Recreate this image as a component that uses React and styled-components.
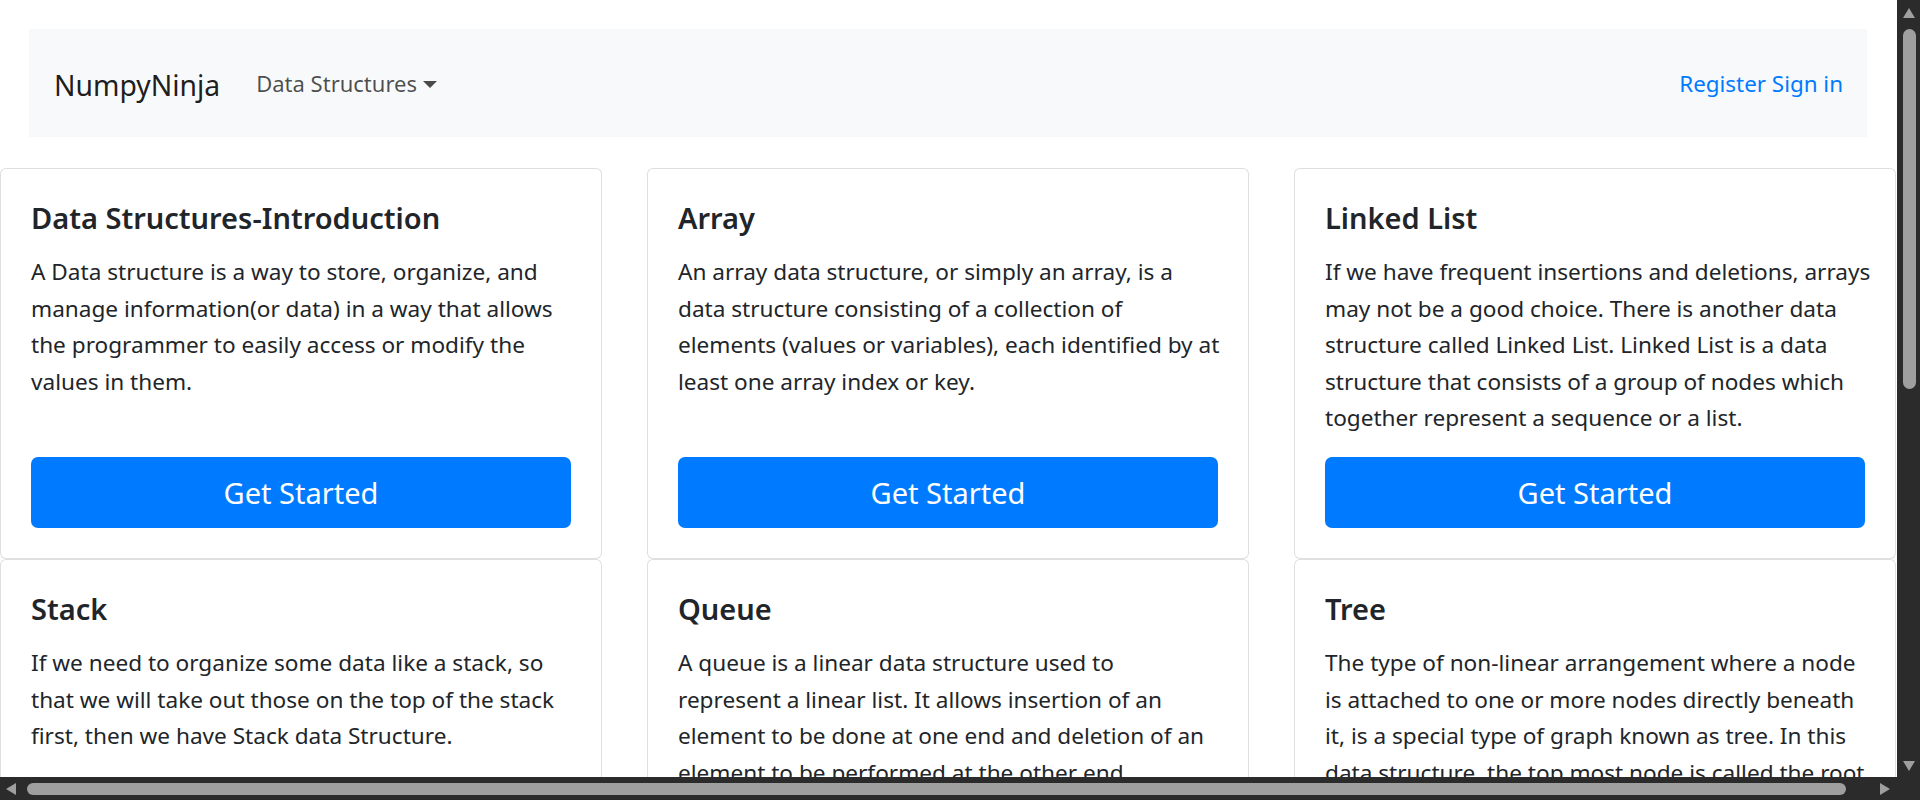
import React from 'react'
import styled, { createGlobalStyle } from 'styled-components'

const GlobalStyle = createGlobalStyle`
  html, body {
    margin: 0;
    padding: 0;
    overflow: hidden;
    background: #fff;
  }
  body {
    font-family: "Noto Sans", "Open Sans", sans-serif;
    color: #212529;
  }
  * { box-sizing: border-box; }
`

const topics = [
  {
    title: 'Data Structures-Introduction',
    lines: [
      'A Data structure is a way to store, organize, and',
      'manage information(or data) in a way that allows',
      'the programmer to easily access or modify the',
      'values in them.',
    ],
  },
  {
    title: 'Array',
    lines: [
      'An array data structure, or simply an array, is a',
      'data structure consisting of a collection of',
      'elements (values or variables), each identified by at',
      'least one array index or key.',
    ],
  },
  {
    title: 'Linked List',
    lines: [
      'If we have frequent insertions and deletions, arrays',
      'may not be a good choice. There is another data',
      'structure called Linked List. Linked List is a data',
      'structure that consists of a group of nodes which',
      'together represent a sequence or a list.',
    ],
  },
  {
    title: 'Stack',
    lines: [
      'If we need to organize some data like a stack, so',
      'that we will take out those on the top of the stack',
      'first, then we have Stack data Structure.',
    ],
  },
  {
    title: 'Queue',
    lines: [
      'A queue is a linear data structure used to',
      'represent a linear list. It allows insertion of an',
      'element to be done at one end and deletion of an',
      'element to be performed at the other end.',
    ],
  },
  {
    title: 'Tree',
    lines: [
      'The type of non-linear arrangement where a node',
      'is attached to one or more nodes directly beneath',
      'it, is a special type of graph known as tree. In this',
      'data structure, the top most node is called the root',
      'node.',
    ],
  },
]

const Page = styled.div`
  height: 100vh;
  overflow: hidden;
`

const Navbar = styled.nav`
  display: flex;
  align-items: center;
  width: 1838px;
  height: 108px;
  margin: 29px 0 31px 29px;
  padding: 0 24px 0 25px;
  background: #f8f9fa;
`

const Brand = styled.a`
  font-size: 28.3px;
  color: rgba(0, 0, 0, 0.9);
  margin-right: 24px;
  padding-top: 4px;
`

const NavLink = styled.a`
  display: flex;
  align-items: center;
  font-size: 22px;
  color: rgba(0, 0, 0, 0.7);
  padding: 0 12px;
`

const Caret = styled.span`
  display: inline-block;
  margin-left: 6px;
  margin-top: 2px;
  border-top: 7.5px solid rgba(0, 0, 0, 0.7);
  border-left: 7.5px solid transparent;
  border-right: 7.5px solid transparent;
`

const AuthLinks = styled.div`
  margin-left: auto;
  font-size: 22.4px;
  color: #007bff;
`

const CardGrid = styled.main`
  display: grid;
  grid-template-columns: repeat(3, 602px);
  column-gap: 45px;
  width: 1896px;
`

const Card = styled.section`
  display: flex;
  flex-direction: column;
  border: 1px solid rgba(0, 0, 0, 0.125);
  border-radius: 6px;
  padding: 30px;
  background: #fff;
`

const CardTitle = styled.h5`
  margin: 0 0 18px;
  font-size: 29px;
  font-weight: 600;
  line-height: 37px;
`

const CardText = styled.p`
  margin: 0 0 20px;
  font-size: 22.6px;
  line-height: 36.6px;
  white-space: nowrap;
`

const StartButton = styled.button`
  margin-top: auto;
  width: 100%;
  height: 71px;
  border: none;
  border-radius: 7px;
  background: #007bff;
  color: #fff;
  font-family: inherit;
  font-size: 29px;
  cursor: pointer;
`

const Track = styled.div`
  position: fixed;
  background: #2b2b2b;
  display: flex;
  align-items: center;
`

const VTrack = styled(Track)`
  top: 0;
  right: 0;
  width: 23px;
  height: 777px;
  flex-direction: column;
  padding: 7px 0 5px;
`

const HTrack = styled(Track)`
  left: 0;
  bottom: 0;
  width: 1920px;
  height: 23px;
  padding: 0 29px 0 5px;
`

const Thumb = styled.div`
  background: #9f9f9f;
  border-radius: 7px;
  width: ${({ $vertical }) => ($vertical ? '13px' : '1820px')};
  height: ${({ $vertical }) => ($vertical ? '360px' : '12px')};
  margin: ${({ $vertical }) => ($vertical ? '10px 0 0 1px' : '0 33px 0 10px')};
`

const Spacer = styled.div`
  flex: 1;
`

const Arrow = ({ dir }) => {
  const pts = {
    up: '6,1 12,11 0,11',
    down: '0,1 12,1 6,11',
    left: '11,0 11,12 1,6',
    right: '1,0 1,12 11,6',
  }[dir]
  return (
    <svg width="12" height="12" viewBox="0 0 12 12" style={{ flexShrink: 0 }}>
      <polygon points={pts} fill="#9f9f9f" />
    </svg>
  )
}

const App = () => {
  return (
    <Page>
      <GlobalStyle />
      <Navbar>
        <Brand>NumpyNinja</Brand>
        <NavLink>
          Data Structures
          <Caret />
        </NavLink>
        <AuthLinks>Register Sign in</AuthLinks>
      </Navbar>
      <CardGrid>
        {topics.map((t) => (
          <Card key={t.title}>
            <CardTitle>{t.title}</CardTitle>
            <CardText>
              {t.lines.map((line, i) => (
                <React.Fragment key={i}>
                  {line}
                  {i < t.lines.length - 1 && <br />}
                </React.Fragment>
              ))}
            </CardText>
            <StartButton>Get Started</StartButton>
          </Card>
        ))}
      </CardGrid>
      <VTrack>
        <Arrow dir="up" />
        <Thumb $vertical />
        <Spacer />
        <Arrow dir="down" />
      </VTrack>
      <HTrack>
        <Arrow dir="left" />
        <Thumb />
        <Arrow dir="right" />
      </HTrack>
    </Page>
  )
}

export default App
